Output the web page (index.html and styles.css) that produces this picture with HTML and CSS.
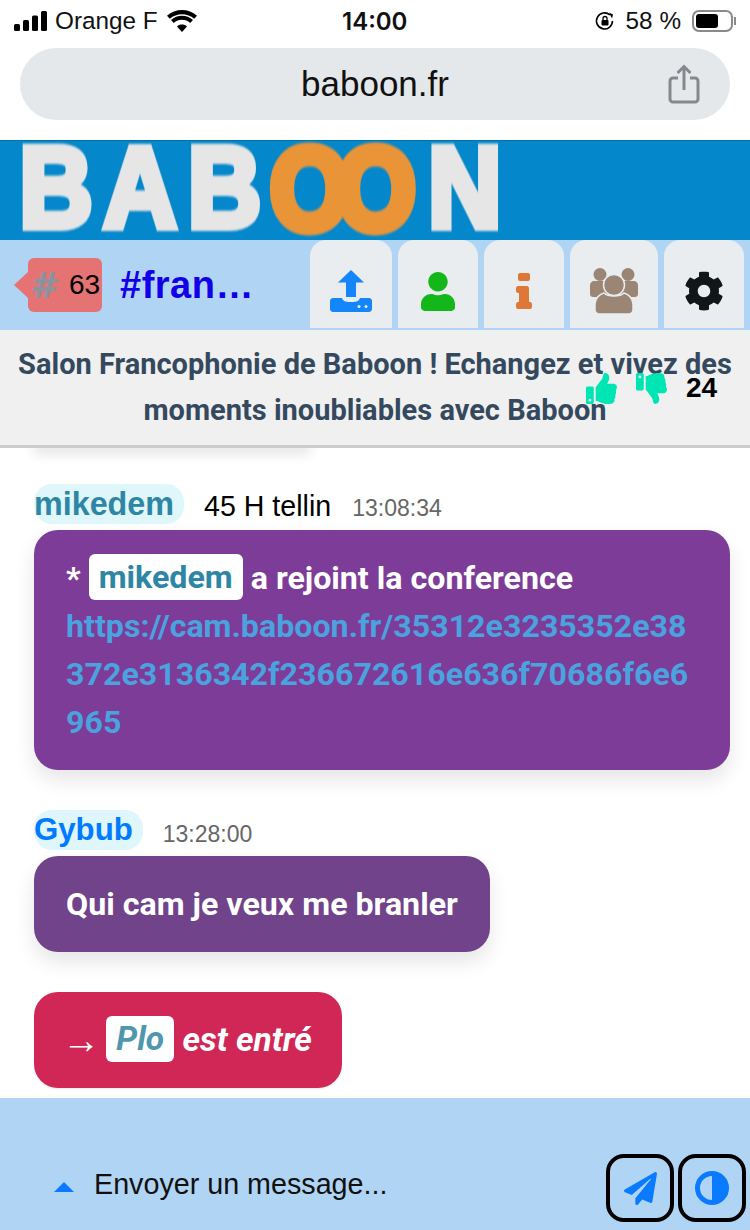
FILE: index.html
```html
<!DOCTYPE html>
<html lang="fr">
<head>
    <meta charset="UTF-8">
    <meta name="viewport" content="width=device-width, initial-scale=1.0">
    <title>baboon.fr</title>
    <link rel="stylesheet" href="styles.css">
</head>
<body>
    <!-- barre du telephone -->
    <div class="status-bar">
        <div class="status-left">
            <svg class="signal" viewBox="0 0 34 20" width="34" height="20"><rect x="0" y="13" width="6" height="7" rx="1.5"/><rect x="9" y="9" width="6" height="11" rx="1.5"/><rect x="18" y="4.500" width="6" height="15.500" rx="1.500"/><rect x="27" y="0" width="6" height="20" rx="1.500"/></svg>
            <span>Orange F</span>
            <svg class="wifi" viewBox="0 0 30 22" width="30" height="22"><path d="M15 22l-5-5.500c2.800-2.600 7.200-2.600 10 0zM6.800 13L4 10c6-5.800 16-5.800 22 0l-2.800 3c-4.600-4.200-11.800-4.200-16.400 0zM2.800 8.800L0 5.800c8.300-7.700 21.700-7.700 30 0l-2.800 3C20.500 2.600 9.500 2.600 2.800 8.800z"/></svg>
        </div>
        <div class="status-time">14:00</div>
        <div class="status-right">
            <svg class="lock" viewBox="0 0 22 22" width="22" height="22"><path d="M18.500 11a8 8 0 1 1-2.600-6" fill="none" stroke="#000" stroke-width="1.600"/><path d="M15 2.500l4 2-1 4z"/><rect x="7.500" y="10" width="7" height="5.500" rx="1"/><path d="M9 10V8.500a2 2 0 0 1 4 0V10" fill="none" stroke="#000" stroke-width="1.300"/></svg>
            <span>58 %</span>
            <div class="battery"><div class="battery-level"></div></div>
            <div class="battery-tip"></div>
        </div>
    </div>

    <div class="address-wrap">
        <div class="address-bar">
            <span>baboon.fr</span>
            <svg class="share" viewBox="0 0 32 40" width="32" height="40"><path d="M10 14H5a3 3 0 0 0-3 3v18a3 3 0 0 0 3 3h22a3 3 0 0 0 3-3V17a3 3 0 0 0-3-3h-5" fill="none" stroke="#85898d" stroke-width="3"/><path d="M16 26V3M9.500 9L16 2.500 22.500 9" fill="none" stroke="#85898d" stroke-width="3"/></svg>
        </div>
    </div>

    <div class="logo-bar">
        <div class="logo"><span class="logo-b">B</span><span class="logo-a">A</span><span class="logo-b2">B</span><span class="logo-o">O</span><span class="logo-o logo-o2">O</span><span class="logo-n">N</span></div>
    </div>

    <div class="nav">
        <div class="room-badge"><span class="room-hash">#</span><span>63</span></div>
        <div class="room-name">#francophonie</div>
        <div class="tabs">
            <div class="tab tab-upload">
                <svg viewBox="0 0 42 42" width="42" height="42"><path d="M21 0l13 12.500h-8V27H16V12.500H8z" fill="#1585fb"/><path d="M3 28h9c1 3 3 4 9 4s8-1 9-4h9c1.600 0 3 1.400 3 3v8c0 1.600-1.400 3-3 3H3c-1.600 0-3-1.400-3-3v-8c0-1.600 1.400-3 3-3z" fill="#1585fb"/><circle cx="29" cy="36.500" r="1.500" fill="#e9edf0"/><circle cx="36" cy="36.500" r="1.500" fill="#e9edf0"/></svg>
            </div>
            <div class="tab tab-user">
                <svg viewBox="0 0 448 512" width="34" height="39"><path fill="#13b71a" d="M224 256c70.700 0 128-57.300 128-128S294.700 0 224 0 96 57.300 96 128s57.300 128 128 128zm89.600 32h-16.700c-22.200 10.200-46.900 16-72.900 16s-50.600-5.800-72.900-16h-16.700C60.200 288 0 348.200 0 422.400V464c0 26.500 21.500 48 48 48h352c26.500 0 48-21.500 48-48v-41.600c0-74.200-60.200-134.400-134.400-134.400z"/></svg>
            </div>
            <div class="tab tab-info">
                <svg viewBox="0 0 16 36" width="16" height="36"><rect x="2" y="0" width="12" height="8" rx="2" fill="#dd7838"/><path d="M2 13h9c1 0 2 1 2 2v14h1c1 0 2 1 2 2v3c0 1-1 2-2 2H2c-1 0-2-1-2-2v-3c0-1 1-2 2-2h1v-9H2c-1 0-2-1-2-2v-3c0-1 1-2 2-2z" fill="#dd7838"/></svg>
            </div>
            <div class="tab tab-users">
                <svg viewBox="0 0 48 46" width="48" height="46"><g fill="#9b8574"><circle cx="10" cy="6.500" r="6.500"/><circle cx="38" cy="6.500" r="6.500"/><path d="M4 13h40c2 0 4 2 4 4v9c0 1.700-1.300 3-3 3H3c-1.700 0-3-1.300-3-3v-9c0-2 2-4 4-4z"/><path d="M14 25c4 4 16 4 20 0 4 1 9 5 9 11v6c0 2-2 4-4 4H9c-2 0-4-2-4-4v-6c0-6 5-10 9-11z" stroke="#e9edf0" stroke-width="1.500"/><circle cx="24" cy="17" r="10.500" stroke="#e9edf0" stroke-width="1.500"/></g></svg>
            </div>
            <div class="tab tab-cog">
                <svg viewBox="0 0 512 512" width="40" height="40"><path fill="#111619" d="M487.400 315.700l-42.600-24.600c4.300-23.200 4.300-47 0-70.200l42.600-24.600c4.900-2.800 7.100-8.600 5.500-14-11.100-35.600-30-67.800-54.700-94.600-3.800-4.100-10-5.100-14.800-2.300L380.800 110c-17.900-15.400-38.500-27.300-60.800-35.100V25.800c0-5.600-3.900-10.500-9.400-11.700-36.700-8.200-74.300-7.800-109.200 0-5.500 1.200-9.400 6.100-9.400 11.700V75c-22.200 7.900-42.800 19.800-60.800 35.100L88.700 85.500c-4.900-2.800-11-1.900-14.800 2.300-24.700 26.700-43.600 58.900-54.700 94.600-1.700 5.400.6 11.200 5.500 14L67.300 221c-4.300 23.200-4.300 47 0 70.200l-42.600 24.600c-4.900 2.800-7.100 8.600-5.500 14 11.100 35.600 30 67.800 54.700 94.600 3.800 4.100 10 5.100 14.800 2.300l42.600-24.600c17.900 15.400 38.500 27.300 60.800 35.100v49.200c0 5.600 3.900 10.500 9.400 11.700 36.700 8.200 74.300 7.800 109.200 0 5.500-1.200 9.400-6.100 9.400-11.700v-49.200c22.200-7.900 42.800-19.800 60.800-35.100l42.600 24.600c4.900 2.800 11 1.900 14.800-2.300 24.700-26.700 43.600-58.900 54.700-94.600 1.500-5.500-.7-11.300-5.600-14.100zM256 336c-44.100 0-80-35.900-80-80s35.900-80 80-80 80 35.900 80 80-35.900 80-80 80z"/></svg>
            </div>
        </div>
    </div>

    <div class="topic">
        <p class="topic-text">Salon Francophonie de Baboon ! Echangez et vivez des moments inoubliables avec Baboon</p>
        <div class="votes">
            <svg class="thumb" viewBox="0 0 512 512" width="31" height="31"><path fill="#00e5b4" d="M104 224H24c-13.255 0-24 10.745-24 24v240c0 13.255 10.745 24 24 24h80c13.255 0 24-10.745 24-24V248c0-13.255-10.745-24-24-24zM64 472c-13.255 0-24-10.745-24-24s10.745-24 24-24 24 10.745 24 24-10.745 24-24 24zM384 81.452c0 42.416-25.970 66.208-33.277 94.548h101.723c33.397 0 59.397 27.746 59.553 58.098.084 17.938-7.546 37.249-19.439 49.197l-.11.11c9.836 23.337 8.237 56.037-9.308 79.469 8.681 25.895-.069 57.704-16.382 74.757 4.298 17.598 2.244 32.575-6.148 44.632C440.202 511.587 389.616 512 346.839 512l-2.845-.001c-48.287-.017-87.806-17.598-119.560-31.725-15.957-7.099-36.821-15.887-52.651-16.178-6.540-.12-11.783-5.457-11.783-11.998v-213.770c0-3.200 1.282-6.271 3.558-8.521 39.614-39.144 56.648-80.587 89.117-113.111 14.804-14.832 20.188-37.236 25.393-58.902C282.515 39.293 291.817 0 312 0c24 0 72 8 72 81.452z"/></svg>
            <svg class="thumb thumb-down" viewBox="0 0 512 512" width="31" height="31"><path fill="#00e5b4" d="M104 224H24c-13.255 0-24 10.745-24 24v240c0 13.255 10.745 24 24 24h80c13.255 0 24-10.745 24-24V248c0-13.255-10.745-24-24-24zM64 472c-13.255 0-24-10.745-24-24s10.745-24 24-24 24 10.745 24 24-10.745 24-24 24zM384 81.452c0 42.416-25.970 66.208-33.277 94.548h101.723c33.397 0 59.397 27.746 59.553 58.098.084 17.938-7.546 37.249-19.439 49.197l-.11.11c9.836 23.337 8.237 56.037-9.308 79.469 8.681 25.895-.069 57.704-16.382 74.757 4.298 17.598 2.244 32.575-6.148 44.632C440.202 511.587 389.616 512 346.839 512l-2.845-.001c-48.287-.017-87.806-17.598-119.560-31.725-15.957-7.099-36.821-15.887-52.651-16.178-6.540-.12-11.783-5.457-11.783-11.998v-213.770c0-3.200 1.282-6.271 3.558-8.521 39.614-39.144 56.648-80.587 89.117-113.111 14.804-14.832 20.188-37.236 25.393-58.902C282.515 39.293 291.817 0 312 0c24 0 72 8 72 81.452z"/></svg>
            <span class="vote-count">24</span>
        </div>
    </div>

    <div class="messages">
        <div class="prev-shadow"></div>

        <div class="message-head">
            <span class="nick nick-mike">mikedem</span>
            <span class="nick-info">45 H tellin</span>
            <span class="msg-time">13:08:34</span>
        </div>
        <div class="bubble bubble-purple">
            * <span class="tag tag-mike">mikedem</span> a rejoint la conference
            <span class="msg-link">https://cam.baboon.fr/35312e3235352e38372e3136342f236672616e636f70686f6e6965</span>
        </div>

        <div class="message-head head-gybub">
            <span class="nick nick-gybub">Gybub</span>
            <span class="msg-time">13:28:00</span>
        </div>
        <div class="bubble bubble-violet">Qui cam je veux me branler</div>

        <div class="bubble bubble-red">
            <span class="arrow">→</span> <span class="tag tag-plo">Plo</span> est entré
        </div>
    </div>

    <div class="footer">
        <div class="input-side">
            <div class="caret-up"></div>
            <span>Envoyer un message...</span>
        </div>
        <div class="footer-buttons">
            <button class="round-button">
                <svg viewBox="0 0 512 512" width="33" height="33"><path fill="#0a7bff" d="M476 3.200L12.500 270.600c-18.100 10.400-15.800 35.600 2.200 43.200L121 358.400l287.300-253.200c5.500-4.900 13.300 2.600 8.600 8.300L176 407v80.500c0 23.600 28.500 32.900 42.500 15.800L282 426l124.600 52.200c14.200 6 30.400-2.900 33-18.200l72-432C515 7.800 493.300-6.800 476 3.200z"/></svg>
            </button>
            <button class="round-button">
                <svg viewBox="0 0 34 34" width="34" height="34"><circle cx="17" cy="17" r="14.500" fill="none" stroke="#0a7bff" stroke-width="5"/><path d="M17 2a15 15 0 0 1 0 30z" fill="#0a7bff"/></svg>
            </button>
        </div>
    </div>
</body>
</html>
```

FILE: styles.css
```css
html, body {
    margin: 0;
    padding: 0;
}
body {
    width: 750px;
    height: 1230px;
    overflow: hidden;
    background-color: #fff;
    font-family: "Liberation Sans", Arial, sans-serif;
    display: flex;
    flex-direction: column;
}

/* barre du telephone */
.status-bar {
    height: 48px;
    display: flex;
    align-items: center;
    justify-content: space-between;
    padding: 0 14px 6px;
    box-sizing: border-box;
    font-size: 24.3px;
    color: #111;
    position: relative;
}
.status-left, .status-right {
    display: flex;
    align-items: center;
}
.status-left span {
    margin-left: 7px;
    margin-right: 9px;
}
.status-time {
    position: absolute;
    left: 342px;
    top: 7px;
    font-weight: 600;
    font-family: "Inter", sans-serif;
    font-size: 24px;
}
.status-right span {
    margin-left: 10px;
    margin-right: 11px;
}
.battery {
    width: 41px;
    height: 22px;
    border: 2px solid #8a8a8a;
    border-radius: 7px;
    box-sizing: border-box;
    padding: 2px;
}
.battery-level {
    width: 22px;
    height: 14px;
    background-color: #000;
    border-radius: 3px;
}
.battery-tip {
    width: 2px;
    height: 8px;
    margin-left: 1px;
    background-color: #8a8a8a;
}

/* barre d'adresse */
.address-wrap {
    padding: 0 20px;
    height: 92px;
}
.address-bar {
    height: 72px;
    border-radius: 36px;
    background-color: #e5e8eb;
    display: flex;
    align-items: center;
    justify-content: center;
    position: relative;
    font-size: 35px;
    color: #111;
}
.share {
    position: absolute;
    right: 30px;
    top: 16px;
}

/* logo */
.logo-bar {
    height: 100px;
    box-sizing: border-box;
    background-color: #0588cb;
    border-top: 1px solid #04709f;
    padding: 2px 0 0 20px;
}
.logo {
    display: flex;
    height: 88px;
    width: 560px;
    font-size: 115px;
    font-weight: bold;
    line-height: 88px;
    color: #e6e6e6;
    -webkit-text-stroke: 8px #e6e6e6;
    transform: scaleX(0.88);
    transform-origin: left top;
    filter: blur(0.8px);
}
.logo span {
    display: flex;
    justify-content: center;
    flex: none;
}
.logo-b {
    width: 82px;
}
.logo-a {
    width: 91px;
    margin-left: 9px;
}
.logo-b2 {
    width: 85px;
    margin-left: 8px;
}
.logo .logo-o {
    width: 91px;
    margin-left: 9px;
    margin-top: 2px;
    color: #ea9438;
    -webkit-text-stroke: 11px #ea9438;
}
.logo .logo-o2 {
    margin-left: -16px;
}
.logo-n {
    width: 85px;
    margin-left: 13px;
}

/* barre du salon */
.nav {
    height: 90px;
    background-color: #b0d4f3;
    display: flex;
    align-items: center;
    position: relative;
}
.room-badge {
    margin-left: 28px;
    width: 74px;
    height: 54px;
    background-color: #e57373;
    border-radius: 6px;
    display: flex;
    align-items: center;
    font-size: 28px;
    color: #000;
    position: relative;
    box-sizing: border-box;
    padding-left: 2px;
}
.room-badge::before {
    content: "";
    position: absolute;
    left: -14px;
    top: 14px;
    border-top: 13px solid transparent;
    border-bottom: 13px solid transparent;
    border-right: 14px solid #e57373;
}
.room-hash {
    font-family: "DejaVu Sans", sans-serif;
    font-size: 36px;
    font-weight: bold;
    color: #8a949f;
    width: 39px;
}
.room-name {
    margin-left: 18px;
    width: 140px;
    font-size: 38px;
    font-weight: bold;
    letter-spacing: 0.5px;
    color: #1400e6;
    white-space: nowrap;
    overflow: hidden;
    text-overflow: ellipsis;
}
.tabs {
    position: absolute;
    left: 310px;
    top: 0;
    display: flex;
    gap: 6px;
}
.tab {
    width: 80px;
    height: 88px;
    background-color: #e9edf0;
    border-radius: 16px 16px 0 0;
    display: flex;
    align-items: center;
    justify-content: center;
    box-sizing: border-box;
    padding-top: 14px;
}
.tab-upload {
    width: 82px;
}
.tab-users {
    width: 88px;
}

/* description du salon */
.topic {
    height: 118px;
    box-sizing: border-box;
    background-color: #f0f0f0;
    border-bottom: 3px solid #ccc;
    position: relative;
    padding: 11px 10px 0;
}
.topic-text {
    margin: 0;
    font-family: Roboto, sans-serif;
    font-weight: bold;
    font-size: 29px;
    line-height: 46px;
    color: #34495e;
    text-align: center;
}
.votes {
    position: absolute;
    left: 586px;
    top: 42px;
    display: flex;
    align-items: center;
}
.thumb-down {
    transform: scaleY(-1);
    margin-left: 19px;
}
.vote-count {
    margin-left: 19px;
    font-size: 28px;
    font-weight: bold;
    color: #000;
}

/* messages */
.messages {
    flex: 1;
    padding: 0 20px 0 34px;
    overflow: hidden;
}
.prev-shadow {
    height: 10px;
    width: 276px;
    margin-top: -10px;
    margin-bottom: 36px;
    box-shadow: 0 6px 12px rgba(0, 0, 0, 0.12);
}
.message-head {
    display: flex;
    align-items: center;
    height: 40px;
    margin-bottom: 6px;
}
.head-gybub {
    margin-top: 40px;
}
.nick {
    height: 40px;
    line-height: 40px;
    border-radius: 18px;
    background-color: #dff6fa;
    font-size: 32.3px;
    font-weight: bold;
    padding-right: 10px;
    margin-right: 20px;
}
.nick-mike {
    color: #2e86a5;
}
.nick-gybub {
    color: #007bff;
    font-size: 31.2px;
}
.nick-info {
    font-size: 28.6px;
    color: #000;
    margin-top: 4px;
    margin-right: 21px;
}
.msg-time {
    font-size: 23px;
    color: #666;
    margin-top: 8px;
}
.bubble {
    border-radius: 24px;
    padding: 24px 32px;
    font-family: Roboto, sans-serif;
    font-weight: bold;
    font-size: 32.2px;
    line-height: 48px;
    color: #fff;
    box-sizing: border-box;
}
.bubble-purple {
    background-color: #7d3c98;
    box-shadow: 0 10px 20px rgba(0, 0, 0, 0.1);
}
.bubble-violet {
    width: 456px;
    background-color: #71438a;
    box-shadow: 0 10px 20px rgba(0, 0, 0, 0.1);
}
.bubble-red {
    width: 308px;
    margin-top: 40px;
    background-color: #d02757;
    font-size: 33.5px;
    font-style: italic;
    white-space: nowrap;
    box-shadow: 0 1px 2px rgba(0, 0, 0, 0.08);
}
.tag {
    display: inline-block;
    height: 46px;
    line-height: 46px;
    background-color: #fff;
    border-radius: 6px;
    padding: 0 10px;
    vertical-align: top;
}
.tag-mike {
    color: #2e86a5;
}
.tag-plo {
    color: #5096ad;
}
.arrow {
    font-family: "Liberation Sans", sans-serif;
    font-style: normal;
    font-weight: normal;
    font-size: 38px;
    line-height: 1;
    vertical-align: -2px;
    margin-left: -4px;
    margin-right: -2px;
}
.msg-link {
    display: block;
    color: #4aa3df;
    word-break: break-all;
}

/* zone de saisie */
.footer {
    height: 132px;
    background-color: #b0d4f3;
    display: flex;
    justify-content: space-between;
    box-sizing: border-box;
    padding: 56px 4px 8px 54px;
}
.input-side {
    display: flex;
    align-items: center;
    font-size: 28.7px;
    color: #111;
    height: 60px;
}
.caret-up {
    width: 0;
    height: 0;
    border-left: 10px solid transparent;
    border-right: 10px solid transparent;
    border-bottom: 10px solid #0a7bff;
    margin-right: 20px;
    margin-top: 6px;
}
.footer-buttons {
    display: flex;
    gap: 4px;
}
.round-button {
    width: 68px;
    height: 68px;
    border: 4px solid #000;
    border-radius: 18px;
    background: transparent;
    padding: 0;
    display: flex;
    align-items: center;
    justify-content: center;
}
```
